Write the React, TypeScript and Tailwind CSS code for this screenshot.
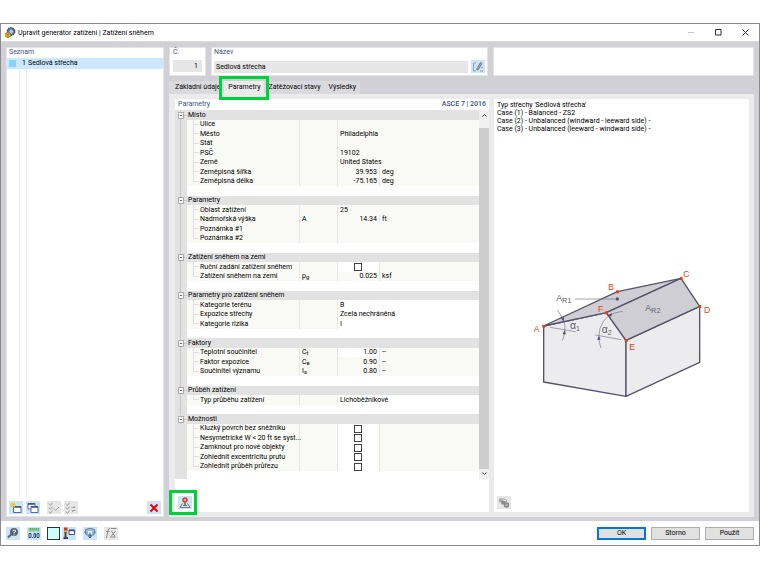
import { useState, type ReactNode } from 'react'
import clsx from 'clsx'

type Row = {
  label: string
  symbol?: [string, string?]
  text?: string
  value?: string
  unit?: string
  check?: boolean
  editable?: boolean
}

type Group = { title: string; rows: Row[] }

const groups: Group[] = [
  {
    title: 'Místo',
    rows: [
      { label: 'Ulice', text: '' },
      { label: 'Město', text: 'Philadelphia' },
      { label: 'Stát', text: '' },
      { label: 'PSČ', text: '19102' },
      { label: 'Země', text: 'United States' },
      { label: 'Zeměpisná šířka', value: '39.953', unit: 'deg' },
      { label: 'Zeměpisná délka', value: '-75.165', unit: 'deg' },
    ],
  },
  {
    title: 'Parametry',
    rows: [
      { label: 'Oblast zatížení', text: '25' },
      { label: 'Nadmořská výška', symbol: ['A'], value: '14.34', unit: 'ft' },
      { label: 'Poznámka #1', text: '' },
      { label: 'Poznámka #2', text: '' },
    ],
  },
  {
    title: 'Zatížení sněhem na zemi',
    rows: [
      { label: 'Ruční zadání zatížení sněhem', check: true },
      { label: 'Zatížení sněhem na zemi', symbol: ['p', 'g'], value: '0.025', unit: 'ksf' },
    ],
  },
  {
    title: 'Parametry pro zatížení sněhem',
    rows: [
      { label: 'Kategorie terénu', text: 'B', editable: true },
      { label: 'Expozice střechy', text: 'Zcela nechráněná', editable: true },
      { label: 'Kategorie rizika', text: 'I', editable: true },
    ],
  },
  {
    title: 'Faktory',
    rows: [
      { label: 'Teplotní součinitel', symbol: ['C', 't'], value: '1.00', unit: '--', editable: true },
      { label: 'Faktor expozice', symbol: ['C', 'e'], value: '0.90', unit: '--' },
      { label: 'Součinitel významu', symbol: ['I', 's'], value: '0.80', unit: '--' },
    ],
  },
  {
    title: 'Průběh zatížení',
    rows: [{ label: 'Typ průběhu zatížení', text: 'Lichoběžníkové', editable: true }],
  },
  {
    title: 'Možnosti',
    rows: [
      { label: 'Kluzký povrch bez sněžníku', check: true },
      { label: 'Nesymetrické W < 20 ft se syst...', check: true },
      { label: 'Zamknout pro nové objekty', check: true },
      { label: 'Zohlednit excentricitu prutu', check: true },
      { label: 'Zohlednit průběh průřezu', check: true },
    ],
  },
]

const tabs = ['Základní údaje', 'Parametry', 'Zatěžovací stavy', 'Výsledky']

const cases = [
  "Typ střechy 'Sedlová střecha'",
  'Case (1) - Balanced - ZS2',
  'Case (2) - Unbalanced (windward - leeward side) -',
  'Case (3) - Unbalanced (leeward - windward side) -',
]

function IconButton({ label, muted, children }: { label: string; muted?: boolean; children: ReactNode }) {
  return (
    <button
      type="button"
      aria-label={label}
      className={clsx('relative flex h-[13px] w-[14px] shrink-0 items-center justify-center', muted ? 'bg-[#e6e6e6]' : 'bg-[#cce4f7]')}
    >
      <svg width="12" height="12" viewBox="0 0 24 24" fill="none" strokeWidth="2">
        {children}
      </svg>
    </button>
  )
}

function GroupRows({ group, last }: { group: Group; last: boolean }) {
  return (
    <>
      <tr className="odd:h-[10px] even:h-[9px]">
        <td colSpan={2} className="bg-[#e2e2e2] p-0">
          <button type="button" aria-label={`Sbalit ${group.title}`} className="ml-[2px] block">
            <svg width="10" height="9" viewBox="0 0 10 9" fill="none">
              <path d="M3.5 0v2M3.5 7v2M7 4.5h3" stroke="#c8c8c8" />
              <path d="M1.5 1.5h5v6h-5z" fill="#f6f6f6" stroke="#a8a8a8" />
              <path d="M3 4.5h2" stroke="#666" />
            </svg>
          </button>
        </td>
        <th colSpan={6} scope="colgroup" className="bg-[#e2e2e2] py-0 pr-0 pl-px text-left font-normal">
          {group.title}
        </th>
      </tr>
      {group.rows.map((row, i) => {
        const end = i === group.rows.length - 1
        const id = `${group.title}-${i}`
        const valueBg = row.editable || row.check ? 'bg-white' : 'bg-[#f9faf5]'
        return (
          <tr key={row.label} className="odd:h-[10px] even:h-[9px]">
            <td className={clsx('bg-[#e2e2e2] p-0', !last && 'border-r border-[#c8c8c8]')} />
            <td className="bg-[#e2e2e2] p-0" />
            <td className="bg-[#f9faf5] p-0" />
            <td className={clsx('bg-[#f9faf5] p-0 align-top', !end && 'border-l border-[#e0e0e0]')}>
              <div className={clsx('h-[5px] border-b border-[#e0e0e0]', end && 'border-l')} />
            </td>
            <td className="bg-[#f9faf5] py-0 pr-0 pl-px whitespace-nowrap">
              {row.check ? <label htmlFor={id}>{row.label}</label> : row.label}
            </td>
            <td className="border-l border-[#e6e6e6] bg-[#f9faf5] py-0 pr-0 pl-[2px]">
              {row.symbol && (
                <>
                  {row.symbol[0]}
                  <span className="relative top-px text-[6px] leading-[0px]">{row.symbol[1]}</span>
                </>
              )}
            </td>
            {row.text !== undefined ? (
              <td colSpan={2} className={clsx('border-l border-[#e6e6e6] py-0 pr-0 pl-[2px]', valueBg)}>
                {row.text}
              </td>
            ) : (
              <>
                <td className={clsx('border-l border-[#e6e6e6] py-0 pr-[2px] pl-0 text-right', valueBg)}>
                  {row.check ? (
                    <input
                      id={id}
                      type="checkbox"
                      className="mx-auto block size-[8px] appearance-none border border-[#444] bg-white checked:bg-[#444]"
                    />
                  ) : (
                    row.value
                  )}
                </td>
                <td className="border-l border-[#e6e6e6] bg-[#f9faf5] py-0 pr-0 pl-[2px]">{row.unit}</td>
              </>
            )}
          </tr>
        )
      })}
      {!last && (
        <tr className="odd:h-[10px] even:h-[9px]">
          <td className="border-r border-[#c8c8c8] bg-[#e2e2e2] p-0" />
          <td className="bg-[#e2e2e2] p-0" />
          <td colSpan={6} className="p-0" />
        </tr>
      )}
    </>
  )
}

function RoofDrawing() {
  return (
    <svg width="203" height="145" viewBox="0 0 609 435" className="mx-auto font-['Liberation_Sans']" fontSize="26">
      <g stroke="#55536a" strokeWidth="4" strokeLinejoin="round">
        <path d="M71 198L259 158L318 241V409L71 366Z" fill="#ececee" />
        <path d="M318 241L539 139V307L318 409Z" fill="#ececee" />
        <path d="M71 198L292 95L483 55L259 158Z" fill="#cfced5" />
        <path d="M259 158L483 55L539 139L318 241Z" fill="#cfced5" />
      </g>
      <g stroke="#77758a" strokeWidth="2" fill="none">
        <path d="M165 117H292M90 202L167 215M226 225L304 239" />
        <path d="M112 150Q150 196 127 242M308 154Q256 158 240 205Q233 238 243 264" />
      </g>
      <g fill="#55536a">
        <circle cx="292" cy="117" r="5" />
        <path d="M131 185l-9-12 10-3zM133 210l-5 13 10 0zM263 166l14-7-4 11zM236 227l-4 13 10-1z" />
      </g>
      <g fill="#e8400f">
        {[[71, 198], [292, 95], [483, 55], [539, 139], [318, 241], [259, 158]].map(([x, y]) => (
          <rect key={`${x}-${y}`} x={x - 4} y={y - 4} width="9" height="9" rx="2" />
        ))}
      </g>
      <g fill="#e8400f" fontWeight="400">
        <text x="41" y="216">A</text>
        <text x="265" y="89">B</text>
        <text x="490" y="52">C</text>
        <text x="552" y="159">D</text>
        <text x="328" y="269">E</text>
        <text x="234" y="155">F</text>
      </g>
      <g fill="#5f5d72" fontWeight="400">
        <text x="109" y="122">A<tspan fontSize="22" dy="6">R1</tspan></text>
        <text x="376" y="154">A<tspan fontSize="22" dy="5">R2</tspan></text>
        <text x="150" y="207" fontSize="31">α<tspan fontSize="21" dy="6">1</tspan></text>
        <text x="245" y="219" fontSize="31">α<tspan fontSize="21" dy="6">2</tspan></text>
      </g>
    </svg>
  )
}

function TitleBar() {
  return (
    <header className="flex h-[18px] items-center border-b border-[#dcdcdc] pl-1">
      <svg width="11" height="11" viewBox="0 0 22 22" aria-hidden="true">
        <circle cx="12" cy="9" r="8" fill="#53709c" stroke="#2f4770" strokeWidth="2" strokeDasharray="3 2" />
        <path d="M8 9l4-5 5 5-4 5z" fill="#b9cae6" />
        <path d="M1 13l5-3 5 3v6l-5 3-5-3z" fill="#d9a926" stroke="#8a6a12" />
        <path d="M1 13l5 3 5-3M6 16v6" stroke="#8a6a12" fill="none" />
      </svg>
      <h1 className="ml-[2px] flex-1 leading-[10px]">Upravit generátor zatížení | Zatížení sněhem</h1>
      <button type="button" aria-label="Minimalizovat" className="flex w-[27px] justify-center">
        <svg width="7" height="7" viewBox="0 0 7 7" stroke="#c8c8c8"><path d="M0 3.5h6" /></svg>
      </button>
      <button type="button" aria-label="Maximalizovat" className="flex w-[27px] justify-center">
        <svg width="7" height="7" viewBox="0 0 7 7" fill="none" stroke="#333"><path d="M.5 .5h5.500v5.500h-5.500z" /></svg>
      </button>
      <button type="button" aria-label="Zavřít" className="flex w-[27px] justify-center">
        <svg width="7" height="7" viewBox="0 0 7 7" stroke="#333"><path d="M.5 .5l6 6M6.500 .5l-6 6" /></svg>
      </button>
    </header>
  )
}

function ObjectList() {
  return (
    <aside className="flex w-[158px] shrink-0 flex-col border border-[#e4e4e8] bg-white">
      <h2 className="h-[10px] pl-[2px] leading-[9px] text-[#43548a]">Seznam</h2>
      <div className="flex h-[11px] items-center bg-[#cce8ff] pl-[2px]">
        <span className="size-[7px] bg-[#84d4f2]" />
        <span className="w-[10px] text-right">1</span>
        <span className="ml-[2px]">Sedlová střecha</span>
      </div>
      <div className="flex flex-1">
        <div className="w-[13px] border-r border-[#ececec]" />
        <div className="w-[7px] border-r border-[#ececec]" />
      </div>
      <div className="flex items-center gap-[3px] px-[2px] pt-1 pb-[2px]">
        <IconButton label="Nový">
          <path d="M7 9h15v12H7z" fill="#fff" stroke="#5a6a94" />
          <path d="M7 10h15" stroke="#42527e" strokeWidth="3" />
          <path d="M6 0v12M0 6h12M2 2l8 8M10 2l-8 8" stroke="#e8c71c" strokeWidth="2" />
        </IconButton>
        <IconButton label="Kopírovat">
          <path d="M2 3h14v11H2z" fill="#fff" stroke="#5a6a94" />
          <path d="M8 9h14v12H8z" fill="#fff" stroke="#5a6a94" />
          <path d="M2 4h14M8 10h14" stroke="#42527e" strokeWidth="3" />
        </IconButton>
        <span className="w-px" />
        <IconButton label="Vybrat vše" muted>
          <path d="M2 3l3 4 4-6M2 11l3 4 4-6M2 19l3 4 4-6M12 13l3 4 7-7" stroke="#a2a2a2" />
        </IconButton>
        <IconButton label="Obrátit výběr" muted>
          <path d="M2 3l3 4 4-6M2 11l3 4 4-6M2 19l3 4 4-6M13 11h7l-2-3M21 17h-7l2 3" stroke="#a2a2a2" />
        </IconButton>
        <span className="flex-1" />
        <IconButton label="Smazat">
          <path d="M5 5l14 14M19 5L5 19" stroke="#f00000" strokeWidth="4" />
        </IconButton>
      </div>
    </aside>
  )
}

function ParameterPanel() {
  return (
    <section className="flex min-w-0 flex-1 flex-col bg-white">
      <div className="flex h-[11px] items-center justify-between px-[3px] text-[#43548a]">
        <h2>Parametry</h2>
        <span className="font-medium">ASCE 7 | 2016</span>
      </div>
      <div className="flex">
        <div className="min-w-0 flex-1">
          <table className="w-full table-fixed border-separate border-spacing-0 leading-[9px]">
            <colgroup>
              <col className="w-[6px]" />
              <col className="w-[6px]" />
              <col className="w-[6px]" />
              <col className="w-[6px]" />
              <col className="w-[100px]" />
              <col className="w-[38px]" />
              <col className="w-[42px]" />
              <col />
            </colgroup>
            <tbody>
              {groups.map((group, i) => (
                <GroupRows key={group.title} group={group} last={i === groups.length - 1} />
              ))}
            </tbody>
          </table>
          <div className="h-2 w-3 bg-[#e2e2e2]" />
        </div>
        <div className="flex w-[10px] flex-col bg-[#cdcdcd]">
          <button type="button" aria-label="Nahoru" className="flex h-[18px] justify-center bg-[#f0f0f0] pt-[3px]">
            <svg width="5" height="4" viewBox="0 0 5 4" fill="none" stroke="#333"><path d="M.5 3.500l2-2 2 2" /></svg>
          </button>
          <div className="flex-1" />
          <button type="button" aria-label="Dolů" className="flex h-[10px] items-center justify-center bg-[#f0f0f0]">
            <svg width="5" height="4" viewBox="0 0 5 4" fill="none" stroke="#333"><path d="M.5 .5l2 2 2-2" /></svg>
          </button>
        </div>
      </div>
      <div className="flex-1 px-[3px] pt-[17px] pb-[3px]">
        <div className="relative w-[14px]">
          <IconButton label="Vybrat místo na mapě">
            <path d="M7 13L2 21h20l-5-8M8 17h8" stroke="#777" />
            <path d="M12 9v8" stroke="#666" strokeWidth="3" />
            <circle cx="12" cy="6" r="4" fill="#f4b0a0" stroke="#d2452c" strokeWidth="3" />
          </IconButton>
          <span className="pointer-events-none absolute -top-[6px] -right-[5px] -bottom-[6px] -left-[9px] border-3 border-[#00d03c]" />
        </div>
      </div>
    </section>
  )
}

function PreviewPanel() {
  return (
    <section className="flex w-[255px] shrink-0 flex-col bg-white px-[3px] pt-[2px] pb-[3px]">
      <div className="leading-[8px]">
        {cases.map((line) => (
          <p key={line}>{line}</p>
        ))}
      </div>
      <div className="flex flex-1 items-center pt-9">
        <RoofDrawing />
      </div>
      <IconButton label="Nastavení zobrazení" muted>
        <path d="M2 3h9v8H2z" fill="#aaa" />
        <path d="M7 8h8v7H7z" fill="#888" />
        <circle cx="17" cy="16" r="4" fill="#b5b5b5" stroke="#888" strokeWidth="3" />
        <path d="M11 3l6 3v4" stroke="#aaa" />
      </IconButton>
    </section>
  )
}

function Footer() {
  return (
    <footer className="flex h-6 items-center px-[5px]">
      <div className="flex flex-1 items-center">
        <IconButton label="Nápověda">
          <circle cx="14" cy="10" r="8" fill="#5a626e" />
          <path d="M8 15l-6 6" stroke="#5a626e" strokeWidth="4" />
          <path d="M11 8q3-4 6-1 1 3-3 4v2M14 15v2" stroke="#fff" />
        </IconButton>
        <span className="w-[7px]" />
        <IconButton label="Jednotky">
          <path d="M1 2h22v7H1z" fill="#83c88b" />
          <path d="M5 2v4M9 2v3M13 2v4M17 2v3M21 2v4" stroke="#4d8d58" strokeWidth="1" />
          <path d="M2 13h4v8H2zM12 13h3v8h-3zM18 13h4v8h-4zM9 20v2" stroke="#34538c" />
        </IconButton>
        <span className="w-[6px]" />
        <button type="button" aria-label="Barva" className="size-[13px] border border-[#333] bg-[#ccffff]" />
        <span className="w-[2px]" />
        <IconButton label="Zobrazení">
          <path d="M2 1h7v7H2z" fill="#d03030" />
          <path d="M2 7h7v6H2z" fill="#e0bb38" />
          <path d="M5 10v12M1 22h9" stroke="#444" strokeWidth="4" />
          <path d="M12 6h11v9H12z" fill="#fff" stroke="#38558c" />
          <path d="M12 7h11" stroke="#38558c" strokeWidth="3" />
        </IconButton>
        <span className="w-[7px]" />
        <IconButton label="Náhled">
          <path d="M3 5q9-5 18 0v9l-4 3H7l-4-3z" fill="#9dbcd8" stroke="#5f86ab" />
          <path d="M0 10l6 2M24 10l-6 2" stroke="#5f86ab" />
          <path d="M8 8h8v6H8z" fill="#e6f2fb" />
          <path d="M12 11v10M9 18l3 4 3-4" stroke="#345e88" />
        </IconButton>
        <span className="w-[7px]" />
        <IconButton label="Funkce" muted>
          <path d="M10 2q-3 0-4 6L3 22M2 9h7M12 3h11M13 8l7 11M21 8L12 19M11 20h10" stroke="#8c8c8c" />
        </IconButton>
      </div>
      <div className="flex gap-[5px]">
        <button type="button" className="h-[13px] w-[49px] border-2 border-[#0078d7] bg-[#e1e1e1] leading-[9px]">OK</button>
        <button type="button" className="h-[13px] w-[49px] border border-[#adadad] bg-[#e1e1e1] leading-[9px]">Storno</button>
        <button type="button" className="h-[13px] w-[49px] border border-[#adadad] bg-[#e1e1e1] leading-[9px]">Použít</button>
      </div>
    </footer>
  )
}

export default function App() {
  const [active, setActive] = useState('Parametry')

  return (
    <div className="bg-white py-[23px] font-['Roboto','Noto_Sans',sans-serif] text-[7px] leading-[9px] text-black">
      <div className="border border-[#8a8a8e] bg-white">
        <TitleBar />
        <div className="flex gap-[5px] bg-[#d0d0d6] px-[5px] pt-[5px] pb-1">
          <ObjectList />
          <main className="flex min-w-0 flex-1 flex-col">
            <div className="flex gap-[5px]">
              <div className="flex h-[29px] w-[37px] flex-col border border-[#e4e4e8] bg-white px-[3px] pb-[3px]">
                <label htmlFor="number" className="flex-1 text-[#43548a]">Č.</label>
                <input id="number" readOnly defaultValue="1" className="h-[12px] w-full bg-[#e6e6e6] pr-1 text-right" />
              </div>
              <div className="flex h-[29px] min-w-0 flex-1 flex-col border border-[#e4e4e8] bg-white px-[2px] pb-[2px]">
                <label htmlFor="name" className="flex-1 text-[#43548a]">Název</label>
                <div className="flex items-center gap-[3px]">
                  <input id="name" defaultValue="Sedlová střecha" className="h-[12px] min-w-0 flex-1 bg-[#e6e6e6] pl-[2px]" />
                  <IconButton label="Upravit název">
                    <path d="M8 4H3v16h5M16 20h6M18 13h4" stroke="#889" strokeWidth="1.500" />
                    <path d="M9 17L17 3l3 2-8 13z" fill="#9ab" stroke="#667" strokeWidth="1.500" />
                  </IconButton>
                </div>
              </div>
              <div className="h-[29px] w-[261px] shrink-0 border border-[#e4e4e8] bg-white" />
            </div>
            <div role="tablist" className="mt-[5px] flex">
              {tabs.map((tab) => (
                <button
                  key={tab}
                  type="button"
                  role="tab"
                  aria-selected={tab === active}
                  onClick={() => setActive(tab)}
                  className={clsx('relative h-[13px] px-1 whitespace-nowrap first:pl-[6px]', tab === active ? 'bg-[#ebebeb]' : 'bg-[#dadade]')}
                >
                  {tab}
                  {tab === 'Parametry' && (
                    <span className="pointer-events-none absolute -inset-x-[5px] -top-[5px] -bottom-[6px] z-10 border-3 border-[#00d03c]" />
                  )}
                </button>
              ))}
            </div>
            <div className="flex flex-1 gap-[5px] bg-[#ebebeb] p-[5px] pl-[6px]">
              <ParameterPanel />
              <PreviewPanel />
            </div>
          </main>
        </div>
        <Footer />
      </div>
    </div>
  )
}
